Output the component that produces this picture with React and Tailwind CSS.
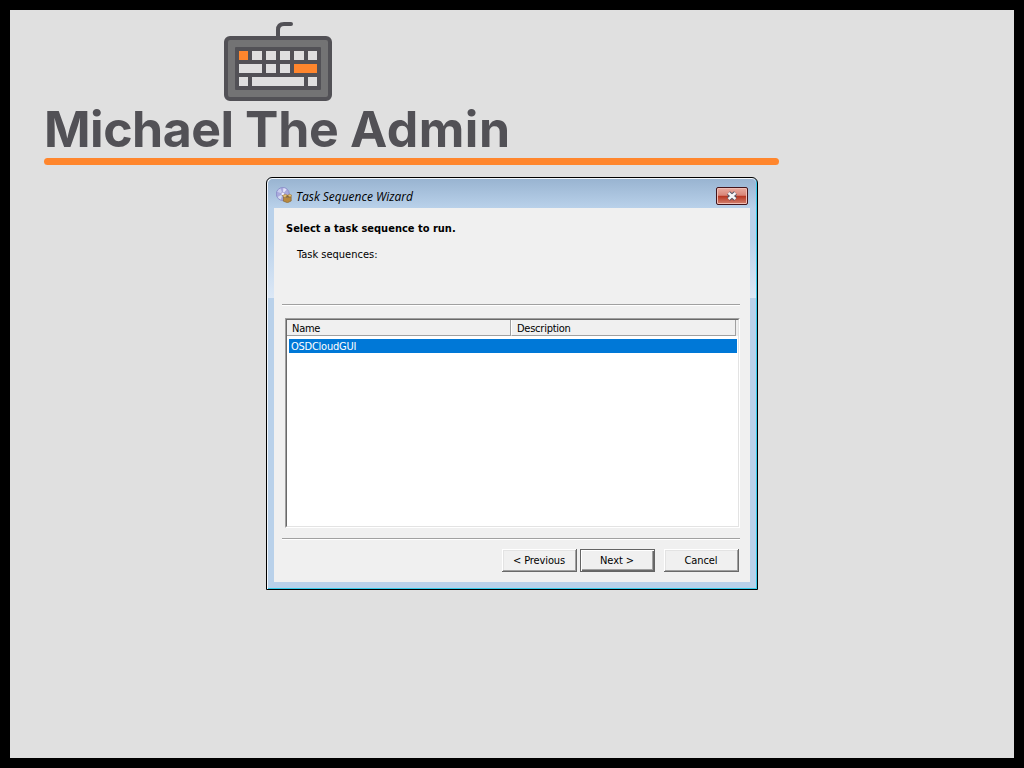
function Keyboard() {
  const keys = [
    [239, 51, 9, 9, 1], [252, 51, 10, 9], [266, 51, 10, 9], [280, 51, 10, 9], [294, 51, 10, 9], [308, 51, 9, 9],
    [239, 64, 23, 9], [266, 64, 10, 9], [280, 64, 10, 9], [294, 64, 23, 9, 1],
    [239, 77, 9, 9], [252, 77, 52, 9], [308, 77, 9, 9],
  ];
  return (
    <svg className="block h-[82px] w-[110px]" viewBox="223 20 110 82">
      <path d="M278 38V30Q278 24 284 24H291" fill="none" stroke="#525156" strokeWidth="4" strokeLinecap="round" />
      <rect x="226" y="38" width="104" height="61" rx="4" fill="#737374" stroke="#525156" strokeWidth="4" />
      <rect x="235" y="47" width="86" height="43" rx="1" fill="#525156" />
      {keys.map(([x, y, w, h, hot]) => (
        <rect key={`${x}-${y}`} x={x} y={y} width={w} height={h} fill={hot ? "#ff862d" : "#dfdfdf"} />
      ))}
    </svg>
  );
}

function DiscIcon() {
  return (
    <svg className="mt-[2px] h-4 w-4" viewBox="0 0 16 16">
      <circle cx="6.8" cy="7" r="6.5" fill="#a9a9dc" stroke="#8688c6" strokeWidth=".8" />
      <path d="M6.8 7L1.2 4.8A6 6 0 0 1 4.4 1.5Z" fill="#c9cdee" />
      <path d="M6.8 7L7.4 1A6 6 0 0 1 10.6 2.4Z" fill="#e2e2fa" />
      <path d="M6.8 7L1.6 10A6 6 0 0 0 4.6 12.6Z" fill="#d5def2" />
      <circle cx="6.8" cy="7" r="1.8" fill="#f2f2ff" stroke="#908fc6" strokeWidth=".6" />
      <path d="M7.4 10L11.5 10.6L15.2 9.6V14L11.5 15.7L7.4 14.2Z" fill="#b8893f" stroke="#80622f" strokeWidth=".6" />
      <path d="M6.2 8.6L9.5 7.3L11.5 8.3L13.8 7.2L16 8.5L14.2 10L11.5 9.4L8.8 10.7Z" fill="#e3c078" stroke="#8c6a30" strokeWidth=".5" />
      <path d="M9.3 9.2L11.5 8.3L13.4 9.2L11.5 9.9Z" fill="#80622f" />
    </svg>
  );
}

function Button({ children, primary, className = "" }) {
  return (
    <button
      className={
        "flex h-[23px] w-[75px] items-center justify-center bg-[#f0f0f0] pr-px text-[11px] leading-none tracking-[-0.1px] text-black " +
        (primary
          ? "border border-[#646464] shadow-[inset_1px_1px_#fff,inset_-1px_-1px_#696969,inset_-2px_-2px_#a0a0a0] "
          : "shadow-[inset_-1px_-1px_#696969,inset_1px_1px_#fff,inset_-2px_-2px_#a0a0a0,inset_2px_2px_#e3e3e3] ") +
        className
      }
    >
      {children}
    </button>
  );
}

export default function App() {
  return (
    <main className="relative h-[768px] w-[1024px] overflow-hidden border-10 border-black bg-[#e0e0e0] text-black">
      <header className="flex w-[770px] flex-col pt-[10px] pl-[34px]">
        <div className="pl-[179px]"><Keyboard /></div>
        <h1 className="h-[56px] font-[Inter,sans-serif] text-[50px] leading-[54px] font-bold tracking-[-0.3px] whitespace-nowrap text-[#525156]">
          <span className="tracking-[-0.5px]">Michael</span> The <span className="tracking-[0.5px]">Admin</span>
        </h1>
        <div className="h-[7px] w-[735px] rounded-full bg-[#ff862d]" />
      </header>

      <section className="absolute top-[167px] left-[256px] flex h-[413px] w-[492px] flex-col rounded-t-[6px] border border-black bg-[#b9d1ea] shadow-[inset_1px_1px_#f4f8fc,inset_-1px_-1px_#35cbea]">
        <div className="mx-px mt-px flex h-[29px] items-center rounded-t-[5px] bg-linear-to-b from-[#99b4d1] to-[#b9d1ea] pr-[8px] pl-[8px]">
          <DiscIcon />
          <span className="ml-1 pt-[6px] font-['Open_Sans',sans-serif] text-[12px] leading-4 tracking-[-0.02px] whitespace-nowrap italic">Task Sequence Wizard</span>
          <button className="mt-[4px] ml-auto flex h-[18px] w-[32px] items-center justify-center rounded-[2px] border border-[#43141a] bg-[linear-gradient(to_bottom,#e8aca1_0%,#d98577_46%,#b7341f_50%,#d28270_100%)] shadow-[inset_0_0_0_1px_#f1bdb4]">
            <svg className="h-[10px] w-[12px]" viewBox="0 0 12 10">
              <path d="M2.5 2L9.5 8M9.5 2L2.5 8" stroke="#535666" strokeWidth="4.4" />
              <path d="M2.5 2L9.5 8M9.5 2L2.5 8" stroke="#f8f8f8" strokeWidth="2.4" />
            </svg>
          </button>
        </div>
        <div className="mx-px flex h-[374px] bg-[linear-gradient(to_bottom,#b9d1ea_0px,#b9d1ea_30px,#dce8f6_90px,#b9d1ea_90px)] pl-[6px]">
          <div className="flex h-[374px] w-[476px] flex-col bg-[#f0f0f0] px-2 font-['DejaVu_Sans_Condensed','DejaVu_Sans',sans-serif] text-[11px] leading-[14px]">
            <h2 className="mt-[14px] ml-1 font-bold whitespace-nowrap">Select a task sequence to run.</h2>
            <p className="mt-3 ml-[15px] whitespace-nowrap">Task sequences:</p>
            <div className="mt-[42px] h-[2px] w-[458px] border-t border-[#a0a0a0] border-b border-b-white" />
            <div className="mt-[12px] ml-[3px] h-[210px] w-[455px] border border-t-[#a0a0a0] border-r-white border-b-white border-l-[#a0a0a0] bg-white">
              <div className="h-[208px] border border-t-[#696969] border-r-[#e3e3e3] border-b-[#e3e3e3] border-l-[#696969]">
                <div className="flex h-[16px] bg-[#f0f0f0] tracking-[-0.25px]">
                  <div className="w-[224px] border-r border-b border-[#a0a0a0] pt-[2px] pl-[5px]">Name</div>
                  <div className="w-[225px] border-r border-b border-l border-[#a0a0a0] border-l-white pt-[2px] pl-[5px]">Description</div>
                </div>
                <div className="mt-[3px] ml-[2px] h-[14px] w-[448px] bg-[#0078d7] pl-[2px] leading-[15px] tracking-[-0.25px] text-white">OSDCloudGUI</div>
              </div>
            </div>
            <div className="mt-[10px] h-[2px] w-[458px] border-t border-[#a0a0a0] border-b border-b-white" />
            <div className="mt-[9px] flex pl-[220px]">
              <Button>&lt; Previous</Button>
              <Button primary className="ml-[3px]">Next &gt;</Button>
              <Button className="ml-[9px]">Cancel</Button>
            </div>
          </div>
        </div>
      </section>
    </main>
  );
}
